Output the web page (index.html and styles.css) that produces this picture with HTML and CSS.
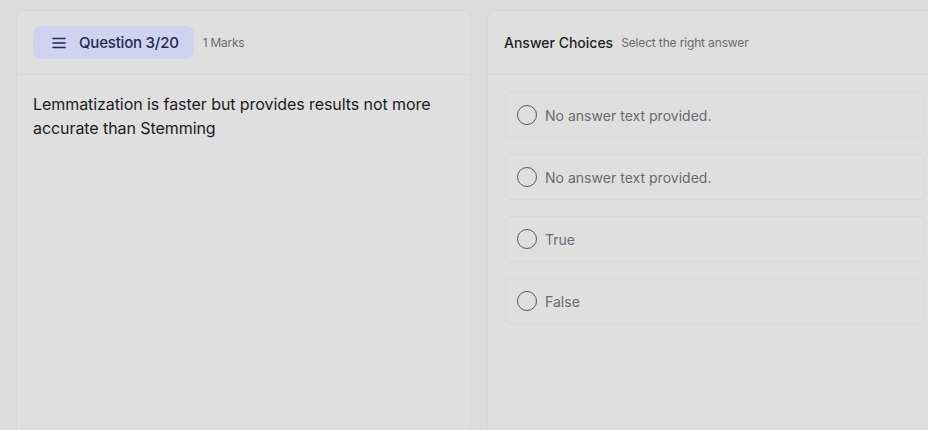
FILE: index.html
```html
<!DOCTYPE html>
<html lang="en">
<head>
<meta charset="utf-8">
<title>Question 3/20</title>
<link rel="stylesheet" href="styles.css">
</head>
<body>
<div class="page">
  <section class="card question-card">
    <header class="card-head">
      <div class="q-pill">
        <svg class="menu-icon" width="14" height="12" viewBox="0 0 14 12" aria-hidden="true">
          <path d="M1 1.5h12M1 6h12M1 10.5h12" stroke="#1f2a55" stroke-width="1.6" stroke-linecap="round" fill="none"/>
        </svg>
        <span class="q-label">Question 3/20</span>
      </div>
      <span class="marks">1 Marks</span>
    </header>
    <div class="card-body">
      <p class="q-text">Lemmatization is faster but provides results not more accurate than Stemming</p>
    </div>
  </section>
  <section class="card answer-card">
    <header class="card-head">
      <span class="a-title">Answer Choices</span>
      <span class="a-sub">Select the right answer</span>
    </header>
    <div class="card-body options">
      <label class="option"><span class="radio"></span><span class="opt-text">No answer text provided.</span></label>
      <label class="option"><span class="radio"></span><span class="opt-text">No answer text provided.</span></label>
      <label class="option"><span class="radio"></span><span class="opt-text">True</span></label>
      <label class="option"><span class="radio"></span><span class="opt-text">False</span></label>
    </div>
  </section>
</div>
</body>
</html>
```
FILE: styles.css
```css
html, body {
  margin: 0;
  padding: 0;
  height: 100%;
  overflow: hidden;
  background: #dcdcdd;
  font-family: Inter, "Noto Sans", "Liberation Sans", sans-serif;
}
.page {
  display: grid;
  grid-template-columns: 455px 455px;
  gap: 16px;
  padding: 10px 16px 0 16px;
  height: 100%;
  box-sizing: border-box;
}
.card {
  background: #dfdfdf;
  border: 1px solid #d7d7d8;
  border-bottom: none;
  border-radius: 8px 8px 0 0;
  display: flex;
  flex-direction: column;
}
.card-head {
  height: 64px;
  box-sizing: border-box;
  border-bottom: 1px solid #d7d7d8;
  display: flex;
  align-items: center;
  padding: 0 16px;
}
.q-pill {
  display: flex;
  align-items: center;
  gap: 13px;
  height: 33px;
  padding: 0 15px 0 19px;
  background: #cfd3ef;
  border-radius: 8px;
  box-sizing: border-box;
}
.menu-icon { display: block; }
.q-label {
  font-size: 15px;
  font-weight: 500;
  color: #1f2a55;
  letter-spacing: -0.2px;
}
.marks {
  margin-left: 9px;
  font-size: 12px;
  color: #6f6b66;
  letter-spacing: -0.25px;
}
.card-body {
  padding: 17px 16px 16px;
}
.q-text {
  margin: 0;
  font-size: 16px;
  line-height: 24px;
  color: #1b1b1d;
  letter-spacing: -0.07px;
}
.a-title {
  font-size: 14px;
  font-weight: 500;
  color: #1f1f22;
}
.a-sub {
  margin-left: 8px;
  font-size: 12px;
  color: #6c6b70;
  letter-spacing: -0.15px;
}
.options {
  display: flex;
  flex-direction: column;
  gap: 16px;
  padding: 17px 16px 16px 17px;
}
.option {
  display: flex;
  align-items: center;
  gap: 8px;
  height: 46px;
  box-sizing: border-box;
  padding: 0 11px;
  border: 1px solid #d8d8d9;
  border-radius: 6px;
  width: 420px;
}
.radio {
  width: 18px;
  height: 18px;
  border: 1px solid #5a5a60;
  border-radius: 50%;
  flex: none;
}
.opt-text {
  font-size: 14px;
  color: #6a6a70;
  letter-spacing: 0.02px;
}
```
